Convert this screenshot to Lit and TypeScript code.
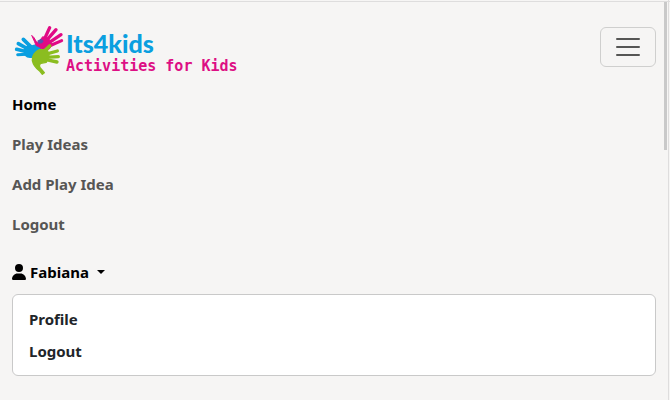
import { LitElement, html, css } from "lit";
import { customElement, property, state } from "lit/decorators.js";

@customElement("brand-logo")
class BrandLogo extends LitElement {
  static styles = css`
    :host { display: block; }
    .brand { display: flex; align-items: flex-end; padding-top: 4px; text-decoration: none; }
    .hands { width: 54px; height: 54px; flex: none; display: block; }
    .words { display: flex; flex-direction: column; }
    .name { font: 900 25px/26px Lato, "Open Sans", sans-serif; color: #0a9fe0; }
    .tagline { font: 700 15px/20px "DejaVu Sans Mono", monospace; color: #dd0f84; white-space: nowrap; }
  `;
  render() {
    return html`
      <a class="brand" href="#">
        <svg class="hands" viewBox="0 0 162 162" fill="none" stroke-linecap="round" stroke-linejoin="round" aria-hidden="true">
          <g stroke="#0a9fe0" fill="#0a9fe0">
            <path stroke-width="11" d="M56 74 L34 52" />
            <path stroke-width="11" d="M48 81 L19 65" />
            <path stroke-width="11" d="M44 89 L14 82" />
            <path stroke-width="9" d="M44 97 L17 98" />
            <path stroke-width="4" d="M50 69 Q60 74 66 70 Q74 66 84 74 L86 86 Q68 88 62 105 Q48 109 39 99 L38 80 Z" />
          </g>
          <g stroke="#e10a85" fill="#e10a85">
            <path stroke-width="10" d="M97 52 L113 17" />
            <path stroke-width="10" d="M103 56 L132 23" />
            <path stroke-width="10" d="M108 64 L147 38" />
            <path stroke-width="9" d="M112 72 L149 56" />
            <path stroke-width="3" d="M60 41 L66 47 L73 59 L79 62 L92 44 L110 50 L120 68 L112 81 L92 84 L83 76 L72 70 L68 60 Z" />
          </g>
          <path fill="#5a4fae" d="M76 56 L87 50 L95 57 L90 64 L80 65 Z" />
          <g stroke="#8bbd20" fill="#8bbd20">
            <path stroke-width="11" d="M91 93 L113 72" />
            <path stroke-width="10" d="M97 98 L136 87" />
            <path stroke-width="10" d="M101 106 L139 104" />
            <path stroke-width="10" d="M99 112 L135 120" />
            <path stroke-width="4" d="M82 83 L106 83 L111 102 L103 121 L87 124 Q79 130 85 138 L97 152 L91 157 L82 146 Q65 134 61 116 Q60 94 82 83 Z" />
          </g>
        </svg>
        <span class="words">
          <span class="name">Its4kids</span>
          <span class="tagline">Activities for Kids</span>
        </span>
      </a>
    `;
  }
}

@customElement("user-menu")
class UserMenu extends LitElement {
  @property() name = "";
  @state() open = true;

  static styles = css`
    :host { display: block; font: inherit; }
    .toggle {
      display: flex; align-items: center; height: 40px; padding: 0; border: 0;
      background: none; font: inherit; color: #000; cursor: pointer;
    }
    .person { width: 14px; height: 16px; margin-right: 4px; }
    .caret { margin-left: 8px; border: 4px solid transparent; border-top-color: #000; border-bottom: 0; }
    .menu {
      margin: 2px 0 0; padding: 8px 0; list-style: none;
      background: #fff; border: 1px solid #c9c9c9; border-radius: 6px;
    }
    .item { display: block; padding: 4px 16px; line-height: 24px; color: #212529; text-decoration: none; }
  `;
  render() {
    return html`
      <button class="toggle" aria-expanded=${this.open} @click=${() => (this.open = !this.open)}>
        <svg class="person" viewBox="0 0 448 512" aria-hidden="true">
          <path d="M224 256A128 128 0 1 0 224 0a128 128 0 1 0 0 256zm-45.700 48C79.800 304 0 383.800 0 482.300C0 498.700 13.300 512 29.700 512H418.300c16.400 0 29.700-13.300 29.700-29.700C448 383.800 368.200 304 269.700 304H178.300z" />
        </svg>
        ${this.name}<span class="caret"></span>
      </button>
      ${this.open
        ? html`<ul class="menu">
            <li><a class="item" href="#">Profile</a></li>
            <li><a class="item" href="#">Logout</a></li>
          </ul>`
        : null}
    `;
  }
}

@customElement("app-root")
class AppRoot extends LitElement {
  @state() expanded = true;

  static styles = css`
    :host {
      display: block; position: relative; box-sizing: border-box; min-height: 100vh;
      padding: 10px 14px 24px 12px; background: #f6f5f4;
      font: 700 15px/24px "Noto Sans", "Open Sans", sans-serif;
    }
    .edge-top { position: absolute; top: 1px; left: 0; right: 0; height: 1px; background: #dedddd; }
    .edge-right { position: absolute; top: 0; bottom: 0; right: 1px; width: 1px; background: #dedddd; }
    .thumb { position: absolute; top: 2px; right: 3px; width: 3px; height: 148px; background: #c9c9c9; }
    .bar { display: flex; align-items: center; justify-content: space-between; height: 74px; }
    .toggler {
      display: flex; align-items: center; justify-content: center;
      width: 56px; height: 40px; padding: 0; background: none;
      border: 1px solid #cfcfce; border-radius: 6px; cursor: pointer;
    }
    .lines { width: 30px; height: 30px; }
    .links { margin: 0 0 8px; padding: 0; list-style: none; }
    .link { display: block; padding: 8px 0; color: #565655; text-decoration: none; }
    .link.active { color: #000; }
  `;
  render() {
    const links = ["Home", "Play Ideas", "Add Play Idea", "Logout"];
    return html`
      <div class="edge-top"></div>
      <div class="edge-right"></div>
      <div class="thumb"></div>
      <header class="bar">
        <brand-logo></brand-logo>
        <button class="toggler" aria-label="Toggle navigation" aria-expanded=${this.expanded}
          @click=${() => (this.expanded = !this.expanded)}>
          <svg class="lines" viewBox="0 0 30 30" aria-hidden="true">
            <path stroke="#565655" stroke-width="2" stroke-linecap="round" d="M4 7h22M4 15h22M4 23h22" />
          </svg>
        </button>
      </header>
      ${this.expanded
        ? html`<nav>
            <ul class="links">
              ${links.map((l, i) => html`<li><a class="link ${i === 0 ? "active" : ""}" href="#">${l}</a></li>`)}
            </ul>
            <user-menu name="Fabiana"></user-menu>
          </nav>`
        : null}
    `;
  }
}
